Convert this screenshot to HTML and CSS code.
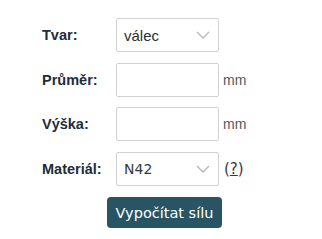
FILE: index.html
```html
<!DOCTYPE html>
<html lang="cs">
<head>
    <meta charset="UTF-8">
    <title>Výpočet síly magnetu</title>
    <link rel="stylesheet" href="styles.css">
</head>
<body>

<form class="calc">
    <label class="calc-label" for="tvar">Tvar:</label>
    <div class="select">
        <span class="select-value">válec</span>
        <svg class="chevron" width="14" height="8" viewBox="0 0 14 8">
            <path d="M1 1 L7 7 L13 1" fill="none" stroke="#b5b9bc" stroke-width="1.4"/>
        </svg>
    </div>
    <span></span>

    <label class="calc-label" for="prumer">Průměr:</label>
    <input class="field" id="prumer" type="text">
    <span class="unit">mm</span>

    <label class="calc-label" for="vyska">Výška:</label>
    <input class="field" id="vyska" type="text">
    <span class="unit">mm</span>

    <label class="calc-label" for="material">Materiál:</label>
    <div class="select">
        <span class="select-value grotesk">N42</span>
        <svg class="chevron" width="14" height="8" viewBox="0 0 14 8">
            <path d="M1 1 L7 7 L13 1" fill="none" stroke="#b5b9bc" stroke-width="1.4"/>
        </svg>
    </div>
    <span class="help">(<a href="#">?</a>)</span>

    <button class="submit" type="button">Vypočítat sílu</button>
</form>

</body>
</html>
```

FILE: styles.css
```css
* {
    margin: 0;
    padding: 0;
    box-sizing: border-box;
}

body {
    background: #ffffff;
    font-family: "Liberation Sans", Arial, sans-serif;
}

.calc {
    display: grid;
    grid-template-columns: 74px 103px auto;
    grid-auto-rows: 34px;
    row-gap: 10.5px;
    align-items: center;
    padding: 18px 0 0 42px;
}

.calc-label {
    font-size: 14.5px;
    font-weight: bold;
    color: #1e2d3a;
}

.field,
.select {
    width: 103px;
    height: 34px;
    border: 1px solid #cfd2d4;
    border-radius: 2px;
    background: #ffffff;
}

.select {
    display: flex;
    justify-content: space-between;
    align-items: center;
    padding: 0 8px 0 7px;
}

.select-value {
    font-size: 15px;
    color: #2a2f33;
}

.grotesk {
    font-family: "DejaVu Sans", sans-serif;
    font-size: 14px;
    color: #333a40;
}

.unit {
    padding-left: 4px;
    font-size: 14px;
    color: #555a5e;
}

.help {
    padding-left: 5px;
    font-family: "DejaVu Sans", sans-serif;
    font-size: 15px;
    color: #33393e;
}

.help a {
    color: #33393e;
    text-decoration: underline;
    text-decoration-thickness: 1px;
    text-underline-offset: 1px;
}

.submit {
    grid-column: 1 / 4;
    justify-self: start;
    height: 31px;
    width: 115px;
    margin: -1px 0 0 65px;
    border: none;
    border-radius: 4px;
    background: #285464;
    color: #ffffff;
    font-family: "DejaVu Sans", sans-serif;
    font-size: 14.5px;
    cursor: pointer;
}
```
